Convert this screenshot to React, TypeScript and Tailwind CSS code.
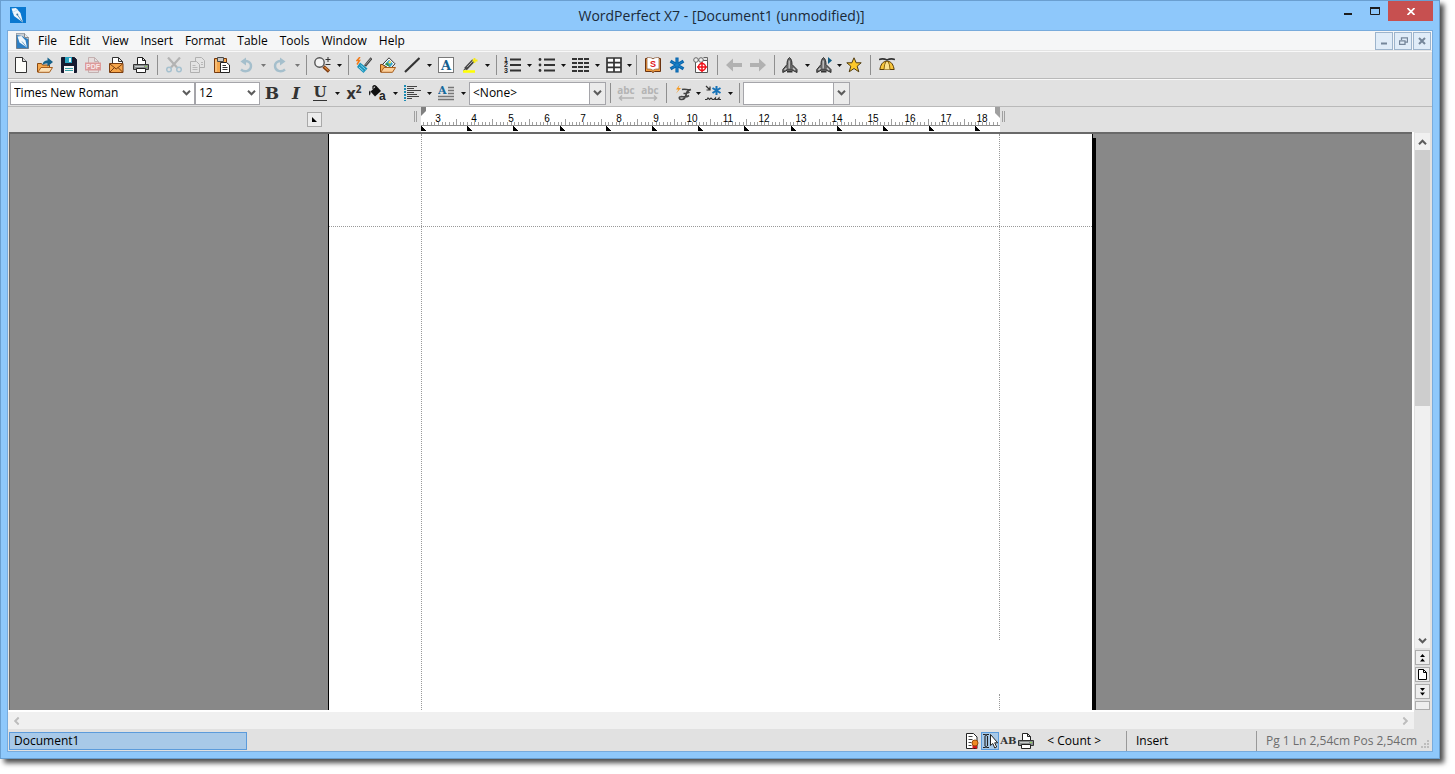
import React from 'react';

interface IconProps {
  children: React.ReactNode;
  w?: number;
  h?: number;
}

const Icon: React.FC<IconProps> = ({ children, w = 16, h = 16 }) => (
  <svg width={w} height={h} viewBox={`0 0 ${w} ${h}`} fill="none" aria-hidden="true" className="shrink-0">
    {children}
  </svg>
);

// Logo

const NibLogo = () => (
  <Icon>
    <rect width="16" height="16" fill="#0a78d0" />
    <path d="M1.500 1.500L6 1l4.500 5L13 15.500 4 9z" fill="#eef6fc" />
    <path d="M7.500 8l5 7" stroke="#5b93bd" />
    <path d="M2.500 5.500L8 2.500" stroke="#b4d3ea" strokeWidth="0.700" />
    <circle cx="7.300" cy="7.500" r="1" fill="#3f7aa8" />
  </Icon>
);

const NibDocument = () => (
  <Icon w={13} h={16}>
    <path d="M.5.5h8l4 4v11H.5z" fill="#2d7fc4" stroke="#6f7f8e" />
    <path d="M.5.5h8l4 4v2L6 3 .5 2z" fill="#c9ced3" />
    <path d="M8.500.5v4h4" fill="#e8e8e8" stroke="#8a8a8a" />
    <path d="M1.500 3.500l4-.5 4 4.500 1.500 7-7.500-5z" fill="#f2f8fc" />
    <path d="M6 8.500l4.500 5.500" stroke="#5b93bd" strokeWidth="0.800" />
  </Icon>
);

// Main toolbar icons

const NewFile = () => (
  <Icon>
    <path d="M2.500.5h7l4 4v11h-11z" fill="#fdfdfa" stroke="#333" />
    <path d="M9.500.5v4h4" fill="#ddd" stroke="#333" />
  </Icon>
);

const OpenFolder = () => (
  <Icon>
    <path d="M.5 15V6.500h4l1 1.500h7v2" fill="#f6a94e" stroke="#8a4a12" />
    <path d="M.8 15.300 4 10.500h11.500l-3 4.800z" fill="#fde0b4" stroke="#a65d1c" />
    <path d="M5.500 8c.5-3.500 2.500-4.500 5-4.500V.5l5.500 4.500-5.500 4.500v-3c-2 0-3.500 0-5 1.500z" fill="#15618a" />
  </Icon>
);

const Save = () => (
  <Icon>
    <path d="M.5.5h13l2 2v13H.5z" fill="#161a30" stroke="#161a30" />
    <path d="M4 0h7v6H4z" fill="#2aa3c0" />
    <path d="M8 1h2v4H8z" fill="#e6f5f8" />
    <path d="M3 9h10v7H3z" fill="#f6f6f6" />
    <path d="M4 11.500h8M4 13.500h8" stroke="#3aa0a8" />
  </Icon>
);

const PdfFile = () => (
  <Icon>
    <path d="M3.500 6V.5h6l4 4V6M3.500 13v2.500h10V13M9.500.5v4h4" fill="#e6dcdc" stroke="#c3b0b0" />
    <rect y="5.500" width="16" height="8" fill="#dc9a9a" />
    <text x="8" y="12" textAnchor="middle" fill="#f8eaea" className="font-['Liberation_Sans',sans-serif] text-[7px] font-bold">
      PDF
    </text>
  </Icon>
);

const Mail = () => (
  <Icon>
    <path d="M3.500 8V.5h6l4 4V13M9.500.5v4h4" fill="#fff" stroke="#333" />
    <path d="M.5 6.500h13.500v9H.5z" fill="#f5a54a" stroke="#7a3d10" />
    <path d="M1 7l6.200 5L13.500 7M1 15l4.500-4.500M13.500 15 9 10.500" stroke="#7a3d10" />
  </Icon>
);

const Printer = () => (
  <Icon>
    <path d="M4.500 7V.5h5l3 3V7M9.500.5v3h3" fill="#fff" stroke="#222" />
    <path d="M.5 7.500h15v5H.5z" fill="#8b8f8f" stroke="#333" />
    <path d="M3.500 11.500h9v4h-9z" fill="#fff" stroke="#222" />
    <path d="M12 9.500h2" stroke="#8fd460" />
    <path d="M2 9.500h9" stroke="#c6caca" />
  </Icon>
);

const Cut = () => (
  <Icon>
    <path d="M2 .5l9 10M14 .5l-9 10" stroke="#b3b3b3" strokeWidth="2.200" />
    <circle cx="3" cy="12.500" r="2.300" stroke="#a6c1cf" strokeWidth="1.500" />
    <circle cx="13" cy="12.500" r="2.300" stroke="#a6c1cf" strokeWidth="1.500" />
  </Icon>
);

const Copy = () => (
  <Icon>
    <path d="M5.500.5h6l3 3v7h-9z" fill="#e3e3e3" stroke="#b0b0b0" />
    <path d="M.5 4.500h6l3 3v8h-9z" fill="#e3e3e3" stroke="#b0b0b0" />
    <path d="M2.500 8.500h3M2.500 10.500h5M2.500 12.500h5M11 5.500h2M11 7.500h2" stroke="#b8b8b8" />
  </Icon>
);

const Paste = () => (
  <Icon>
    <path d="M.5 1.500h12v14H.5z" fill="#f3a64d" stroke="#74380e" />
    <path d="M2 3v12" stroke="#fbd5a2" />
    <path d="M3.500.5h6v4h-6z" fill="#c9c9c9" stroke="#4a4a4a" />
    <path d="M6.500 5.500h6l3 2.500v7.500h-9z" fill="#fff" stroke="#222" />
    <path d="M8.500 8.500H12M8.500 10.500h5M8.500 12.500h5" stroke="#333" />
  </Icon>
);

const Undo = () => (
  <Icon>
    <path d="M5 4.500c4-1.500 8 .8 8 4.500 0 5-6 7-10 3.500" stroke="#a5bfcc" strokeWidth="2.400" />
    <path d="M8 .5v8L2.500 4.500z" fill="#a5bfcc" />
  </Icon>
);

const Redo = () => (
  <Icon>
    <path d="M11 4.500C7 3 3 5.300 3 9c0 5 6 7 10 3.500" stroke="#a5bfcc" strokeWidth="2.400" />
    <path d="M8 .5v8l5.500-4z" fill="#a5bfcc" />
  </Icon>
);

const Find = () => (
  <Icon w={17}>
    <circle cx="5.500" cy="5.500" r="4.700" fill="#f4f4f4" stroke="#555" strokeWidth="1.400" />
    <path d="M9.500 9.500l5.500 5" stroke="#7b3a10" strokeWidth="3.400" />
    <path d="M10.500 10l4 3.600" stroke="#e38b3b" strokeWidth="1.200" />
    <path d="M11.500 2.500h5M14 0v5M11.500 7.500h5" stroke="#333" />
  </Icon>
);

const QuickFormat = () => (
  <Icon>
    <path d="M9 9l6.500-8" stroke="#444" strokeWidth="2.600" />
    <path d="M9.500 8l5.500-6.500" stroke="#aaa" strokeWidth="0.800" />
    <path d="M4 5.500l7.500 6-4 4.500L1 10z" fill="#1993bb" />
    <path d="M4.500 8l5 4.500M3 10l4.500 4" stroke="#8bd8ee" />
    <path d="M4 0L1 3.500h2.500L1 7.500" stroke="#f07a1a" strokeWidth="1.500" />
  </Icon>
);

const ClipArt = () => (
  <Icon>
    <path d="M.5 15V7.500h4l1 1.500" fill="#f6a94e" stroke="#8a4a12" />
    <path d="M2.500 7.500 9 .8l6 6L10 12z" fill="#fff" stroke="#333" />
    <path d="M5 7l4-4.200 4 4-3 3.500z" fill="#36a3c9" />
    <path d="M5 7.500l2-2 3 4.500z" fill="#3e8f36" />
    <circle cx="9.800" cy="5.300" r="1.200" fill="#ffe14a" />
    <path d="M.8 15.300 4 10.500h11.500l-3 4.800z" fill="#fdd09a" stroke="#a65d1c" />
  </Icon>
);

const Line = () => (
  <Icon>
    <path d="M1 15L15.500 1" stroke="#333" strokeWidth="2.200" />
  </Icon>
);

const TextBox = () => (
  <Icon>
    <rect x="1" y="1" width="14" height="14" fill="#fff" />
    <path d="M.5.5h15v15H.5z" stroke="#111" strokeDasharray="1 1" />
    <text x="8" y="13" textAnchor="middle" fill="#17618f" className="font-['DejaVu_Serif',serif] text-[13px] font-bold">
      A
    </text>
  </Icon>
);

const Highlight = () => (
  <Icon>
    <path d="M1 14.500h12" stroke="#ff0" strokeWidth="2.500" />
    <path d="M3.500 12l8-8.500" stroke="#444" strokeWidth="3.400" />
    <path d="M5 10.200l6-6.400" stroke="#b5b5b5" />
    <path d="M1 13.500l2.500-3 1.500 1.500z" fill="#444" />
    <path d="M12.500 1v5M10.500 3.500h5" stroke="#f7ea18" strokeWidth="1.800" />
  </Icon>
);

const digitClass = "font-['Liberation_Sans',sans-serif] text-[7px] font-bold";

const NumberedList = () => (
  <Icon w={17}>
    <path d="M6 2.500h11M6 8h11M6 13.500h11" stroke="#333" strokeWidth="2" />
    <text x="0" y="5" fill="#222" className={digitClass}>1</text>
    <text x="0" y="10" fill="#222" className={digitClass}>2</text>
    <text x="0" y="16" fill="#222" className={digitClass}>3</text>
  </Icon>
);

const BulletList = () => (
  <Icon w={17}>
    <path d="M6 2.500h11M6 8h11M6 13.500h11" stroke="#333" strokeWidth="2" />
    <circle cx="2" cy="2.500" r="1.400" fill="#333" />
    <circle cx="2" cy="8" r="1.400" fill="#333" />
    <circle cx="2" cy="13.500" r="1.400" fill="#333" />
  </Icon>
);

const Columns = () => (
  <Icon w={17}>
    <path d="M0 2h17M0 6h17M0 10h17M0 14h17" stroke="#333" strokeWidth="2" strokeDasharray="5 1" />
  </Icon>
);

const TableGrid = () => (
  <Icon>
    <path d="M1 1h14v14H1zM8 1v14M1 5.700h14M1 10.400h14" fill="#fff" stroke="#333" strokeWidth="1.700" />
  </Icon>
);

const SpellBook = () => (
  <Icon>
    <path d="M.5 1.500h15v13H9.500l-1.500 1-1.500-1h-6z" fill="#f09a3c" stroke="#6b3310" />
    <path d="M2 .5c2.500 0 5 0 6 1.500 1-1.500 3.500-1.500 6-1.500V12c-3 0-5 0-6 1.500C7 12 5 12 2 12z" fill="#fff" stroke="#8a5a3a" strokeWidth="0.700" />
    <text x="8" y="10" textAnchor="middle" fill="#e1141b" className="font-['Liberation_Sans',sans-serif] text-[9px] font-bold">
      S
    </text>
  </Icon>
);

const Asterisk = () => (
  <Icon>
    <path d="M8 .5v15M1.500 4.200l13 7.600M14.500 4.200l-13 7.600" stroke="#0b66ad" strokeWidth="3.200" />
    <path d="M8 1.500v13M2.500 4.800l11 6.400M13.500 4.800l-11 6.400" stroke="#1a83ca" />
  </Icon>
);

const MacroTarget = () => (
  <Icon>
    <path d="M2.500 3.500h12v12h-12z" fill="#fff" stroke="#555" />
    <circle cx="3" cy="3" r="2.300" fill="#eee" stroke="#666" />
    <circle cx="8" cy="3" r="2.300" fill="#eee" stroke="#666" />
    <path d="M10.500.5h4v4" stroke="#666" />
    <circle cx="9" cy="10" r="3.500" stroke="#f01018" strokeWidth="1.500" />
    <path d="M9 5v10M4 10h10" stroke="#f01018" strokeWidth="1.500" />
  </Icon>
);

const ArrowLeft = () => (
  <Icon>
    <path d="M0 8l7-6.500v4.500h9v4H7v4.500z" fill="#b1b1b1" />
  </Icon>
);

const ArrowRight = () => (
  <Icon>
    <path d="M16 8L9 1.500v4.500H0v4h9v4.500z" fill="#b1b1b1" />
  </Icon>
);

const Rocket = () => (
  <Icon>
    <path d="M7.500.5c2 1.500 2.500 4 2.500 7l5 5v3L10 13H5.500L.8 15.500v-3L5 7.500c0-3 .5-5.500 2.500-7z" fill="#666" stroke="#2f2f2f" />
    <path d="M7.200 3.500v8M2.500 13l2-2M13 13l-2-2" stroke="#c4c4c4" strokeWidth="1.400" />
    <path d="M5 14.500h5.500" stroke="#333" strokeWidth="2" />
  </Icon>
);

const RocketPlay = () => (
  <Icon>
    <path d="M7.500.5c2 1.500 2.500 4 2.500 7l5 5v3L10 13H5.500L.8 15.500v-3L5 7.500c0-3 .5-5.500 2.500-7z" fill="#666" stroke="#2f2f2f" />
    <path d="M7.200 3.500v8M2.500 13l2-2M13 13l-2-2" stroke="#c4c4c4" strokeWidth="1.400" />
    <path d="M5 14.500h5.500" stroke="#333" strokeWidth="2" />
    <path d="M12 0l4 3.500-4 3.500z" fill="#145f85" />
  </Icon>
);

const Star = () => (
  <Icon>
    <path d="M8 .8l2.200 5h5l-4 3.400 1.600 5.600L8 11.500l-4.800 3.300 1.600-5.600-4-3.400h5z" fill="#fdc92a" stroke="#4e3a10" />
  </Icon>
);

const Beanie = () => (
  <Icon>
    <path d="M.8 12.500Q2 5.500 6 4.500h4Q14 5.500 15.200 12.500z" fill="#f8c53b" stroke="#5b3f0c" />
    <path d="M5 12.500Q5.200 7 7 4.500h2Q10.800 7 11 12.500" fill="#fbe08c" stroke="#8a6514" />
    <path d="M0 2.500Q4 1 8 3 12 1 16 2.500" stroke="#333" strokeWidth="1.600" />
  </Icon>
);

// Property bar icons

const FillBucket = () => (
  <Icon w={18}>
    <path d="M1.500 6.500L7.500 1l4.500 5-6 5.500z" fill="#111" />
    <path d="M4 4V1.500q1.500-1.500 3 0V5" stroke="#111" strokeWidth="1.200" />
    <path d="M1 5.500c-1.500 1-1 4-.5 5 1-1 1.500-3 .5-5z" fill="#111" />
    <text x="10" y="15" fill="#222" className="font-['Liberation_Sans',sans-serif] text-[12px] font-bold">
      a
    </text>
  </Icon>
);

const AlignLeft = () => (
  <Icon w={17}>
    <path d="M1 0v16" stroke="#1c8bb3" strokeWidth="2" strokeDasharray="2 1" />
    <path d="M3 1.500h10M3 3.500h7M3 5.500h14M3 7.500h7M3 9.500h10M3 11.500h12M3 13.500h5" stroke="#444" />
  </Icon>
);

const ParagraphFormat = () => (
  <Icon>
    <text x="0" y="9" fill="#176a9c" className="font-['DejaVu_Serif',serif] text-[11px] font-bold">
      A
    </text>
    <path d="M10 2.500h6M10 5.500h6M10 8.500h6M0 11.500h16M0 14.500h16" stroke="#777" strokeWidth="1.500" />
  </Icon>
);

const QuickScript = () => (
  <Icon w={17}>
    <path d="M4.500 0L1 4.500h2.500L1 8.500l5-5.500H3.500z" fill="#f6981d" />
    <path d="M7 4.500c3-1 6 .8 9 0-3 .8-4 1.500-4.500 3.500-.5 3-1.500 6.500-5 6.500-2.500 0-3-2.500-1-2.800 2.500-.5 5 1.500 8.500-1.200M8.500 8.500c2.500 0 4.500 0 6-1.500" stroke="#444" strokeWidth="1.600" />
  </Icon>
);

const SymbolInsert = () => (
  <Icon w={17}>
    <path d="M1 1l4 4M5 1.500V5H1.500" stroke="#333" strokeWidth="1.200" />
    <path d="M11.500 1v9M7.500 3l8 5M15.500 3l-8 5" stroke="#1773b8" strokeWidth="2" />
    <path d="M0 14.500h2l1-1.500 1.500 1.500L6 13l1.500 1.500H9L10.500 13v1.500h2L14 13v1.500h2" stroke="#333" strokeWidth="1.200" />
  </Icon>
);

const Reveal = () => (
  <Icon w={13}>
    <path d="M.5.5h7l3.500 3.500v11.500H.5z" fill="#fff" stroke="#222" />
    <path d="M2.500 3.500h4M2.500 6.500h4M2.500 9.500h3M2.500 12.500h3" stroke="#444" />
    <path d="M6.500 11v5l2-1 2.500 1v-5" fill="#d8161d" />
    <circle cx="9" cy="10" r="3" fill="#f08a24" stroke="#9b4c0c" />
  </Icon>
);

const ShadowCursor = () => (
  <Icon>
    <path d="M1 1.500h2l1 1 1-1h2M1 14.500h2l1-1 1 1h2M3 3v10M5.500 3v10" stroke="#222" strokeWidth="1.100" />
    <path d="M8.500 1.500v11l2.300-2 2 4.500 1.900-1-2-4.200h3z" fill="#fff" stroke="#222" />
  </Icon>
);

// Small shared pieces

const Chevron: React.FC<{ className?: string; color?: string }> = ({ className = '', color = '#5b5b5b' }) => (
  <svg width="9" height="6" viewBox="0 0 9 6" fill="none" aria-hidden="true" className={className}>
    <path d="M1 .8l3.500 3.500L8 .8" stroke={color} strokeWidth="2" />
  </svg>
);

const ToolButton: React.FC<{ label: string; children: React.ReactNode; disabled?: boolean }> = ({
  label,
  children,
  disabled = false,
}) => (
  <button
    type="button"
    aria-label={label}
    disabled={disabled}
    className="flex h-6 w-6 shrink-0 items-center justify-center text-[#333]"
  >
    {children}
  </button>
);

const MenuArrow: React.FC<{ label: string; tight?: boolean; disabled?: boolean }> = ({
  label,
  tight = false,
  disabled = false,
}) => (
  <button
    type="button"
    aria-label={label}
    disabled={disabled}
    className={`flex h-6 shrink-0 items-center justify-center ${tight ? 'w-[6px]' : 'w-[10px]'}`}
  >
    <svg width="5" height="3" viewBox="0 0 5 3" aria-hidden="true" className="shrink-0">
      <path d="M0 0h5L2.500 3z" fill={disabled ? '#777' : '#111'} />
    </svg>
  </button>
);

const Separator: React.FC<{ tight?: boolean }> = ({ tight = false }) => (
  <div className={`flex shrink-0 justify-center ${tight ? 'w-2' : 'w-[9px]'}`}>
    <div className="h-5 w-px bg-[#8f8f8f]" />
  </div>
);

interface ComboProps {
  label: string;
  options: string[];
  width: string;
  boxed?: boolean;
}

const Combo: React.FC<ComboProps> = ({ label, options, width, boxed = false }) => (
  <div className={`relative h-[23px] shrink-0 ${width}`}>
    <select
      aria-label={label}
      className="h-full w-full appearance-none border border-[#a5a5aa] bg-white pl-[3px] text-[12px] leading-4 text-black outline-none"
    >
      {options.map((option) => (
        <option key={option}>{option}</option>
      ))}
    </select>
    <span
      className={`pointer-events-none absolute inset-y-0 right-0 flex w-[17px] items-center justify-center ${
        boxed ? 'border border-[#a5a5aa] bg-[#ebebeb]' : ''
      }`}
    >
      <Chevron />
    </span>
  </div>
);

// Title and menu

const TitleBar = () => (
  <header className="flex h-[29px] shrink-0 items-start">
    <div className="flex flex-1 pt-[6px] pl-[3px]">
      <NibLogo />
    </div>
    <h1 className="pt-[5px] text-[14px] leading-5 text-[#1b2a38]">WordPerfect X7 - [Document1 (unmodified)]</h1>
    <div className="flex flex-1 justify-end">
      <button type="button" aria-label="Minimize" className="flex h-[21px] w-[27px] items-center justify-center">
        <Icon w={8} h={8}>
          <path d="M0 6h8" stroke="#1d1d1d" strokeWidth="2" />
        </Icon>
      </button>
      <button type="button" aria-label="Maximize" className="flex h-5 w-[27px] items-center justify-center">
        <Icon w={10} h={8}>
          <path d="M.5 0v7.500h9V0" stroke="#1d1d1d" />
          <path d="M0 1h10" stroke="#1d1d1d" strokeWidth="2" />
        </Icon>
      </button>
      <button
        type="button"
        aria-label="Close"
        className="flex h-5 w-[45px] items-center justify-center bg-[#c75050]"
      >
        <Icon w={8} h={7}>
          <path d="M.5 0l7 7M7.500 0l-7 7" stroke="#fff" strokeWidth="1.700" />
        </Icon>
      </button>
    </div>
  </header>
);

const menus = ['File', 'Edit', 'View', 'Insert', 'Format', 'Table', 'Tools', 'Window', 'Help'];

const mdiButton = 'flex h-[18px] w-[18px] items-center justify-center border border-[#9db4cc] bg-[#e0ecf8]';

const MenuBar = () => (
  <nav className="flex h-5 shrink-0 items-center border-b border-[#e3e3e3] bg-[#f5f6f7] pr-px pl-2">
    <NibDocument />
    <div className="flex flex-1 pl-[3px]">
      {menus.map((menu) => (
        <button key={menu} type="button" className="px-[6px] leading-4">
          {menu}
        </button>
      ))}
    </div>
    <div className="flex gap-px">
      <button type="button" aria-label="Minimize document" className={mdiButton}>
        <Icon w={8} h={8}>
          <path d="M1 6.500h6" stroke="#75869a" strokeWidth="2" />
        </Icon>
      </button>
      <button type="button" aria-label="Restore document" className={mdiButton}>
        <Icon w={9} h={8}>
          <path d="M2.500 3V.8h6v4.400H6.500M.5 3.800h5.500v3.700H.5z" stroke="#75869a" strokeWidth="1.300" />
        </Icon>
      </button>
      <button type="button" aria-label="Close document" className={mdiButton}>
        <Icon w={8} h={8}>
          <path d="M1 1l6 6M7 1L1 7" stroke="#75869a" strokeWidth="2" />
        </Icon>
      </button>
    </div>
  </nav>
);

// Toolbars

const barClass = 'flex h-7 shrink-0 items-center border-t border-b border-t-[#f8f8f8] border-b-[#b9b9b9]';

const MainToolbar = () => (
  <div role="toolbar" aria-label="Main toolbar" className={`${barClass} pl-px`}>
    <ToolButton label="New"><NewFile /></ToolButton>
    <ToolButton label="Open"><OpenFolder /></ToolButton>
    <ToolButton label="Save"><Save /></ToolButton>
    <ToolButton label="Publish to PDF" disabled><PdfFile /></ToolButton>
    <ToolButton label="Mail"><Mail /></ToolButton>
    <ToolButton label="Print"><Printer /></ToolButton>
    <Separator />
    <ToolButton label="Cut" disabled><Cut /></ToolButton>
    <ToolButton label="Copy" disabled><Copy /></ToolButton>
    <ToolButton label="Paste"><Paste /></ToolButton>
    <ToolButton label="Undo" disabled><Undo /></ToolButton>
    <MenuArrow label="Undo list" disabled />
    <ToolButton label="Redo" disabled><Redo /></ToolButton>
    <MenuArrow label="Redo list" disabled />
    <Separator tight />
    <ToolButton label="Zoom"><Find /></ToolButton>
    <MenuArrow label="Zoom levels" />
    <Separator tight />
    <ToolButton label="QuickFormat"><QuickFormat /></ToolButton>
    <ToolButton label="Clipart"><ClipArt /></ToolButton>
    <ToolButton label="Draw line"><Line /></ToolButton>
    <MenuArrow label="Shapes" />
    <ToolButton label="Text box"><TextBox /></ToolButton>
    <ToolButton label="Highlight"><Highlight /></ToolButton>
    <MenuArrow label="Highlight colors" />
    <Separator tight />
    <ToolButton label="Numbering"><NumberedList /></ToolButton>
    <MenuArrow label="Numbering styles" />
    <ToolButton label="Bullets"><BulletList /></ToolButton>
    <MenuArrow label="Bullet styles" />
    <ToolButton label="Columns"><Columns /></ToolButton>
    <MenuArrow label="Column layouts" />
    <ToolButton label="Table"><TableGrid /></ToolButton>
    <MenuArrow label="Table size" tight />
    <Separator />
    <ToolButton label="Spell Checker"><SpellBook /></ToolButton>
    <ToolButton label="Symbols"><Asterisk /></ToolButton>
    <ToolButton label="Reveal Codes"><MacroTarget /></ToolButton>
    <Separator />
    <ToolButton label="Back" disabled><ArrowLeft /></ToolButton>
    <ToolButton label="Forward" disabled><ArrowRight /></ToolButton>
    <Separator tight />
    <ToolButton label="Launch"><Rocket /></ToolButton>
    <MenuArrow label="Launch list" />
    <ToolButton label="Run"><RocketPlay /></ToolButton>
    <MenuArrow label="Run list" tight />
    <ToolButton label="Favorites"><Star /></ToolButton>
    <Separator />
    <ToolButton label="PerfectExpert"><Beanie /></ToolButton>
  </div>
);

const abcClass = 'text-[10px] leading-[9px] font-bold text-[#b4b4b4]';

const PropertyBar = () => (
  <div role="toolbar" aria-label="Property bar" className={`${barClass} pl-[2px]`}>
    <Combo label="Font" options={['Times New Roman']} width="w-[185px]" />
    <Combo label="Font size" options={['12']} width="w-[65px]" />
    <ToolButton label="Bold">
      <span className="font-['DejaVu_Serif',serif] text-[17px] leading-6 font-bold">B</span>
    </ToolButton>
    <ToolButton label="Italic">
      <span className="font-['DejaVu_Serif',serif] text-[17px] leading-6 font-bold italic">I</span>
    </ToolButton>
    <ToolButton label="Underline">
      <span className="border-b border-[#333] font-['DejaVu_Serif',serif] text-[15px] leading-[15px] font-bold">U</span>
    </ToolButton>
    <MenuArrow label="Underline styles" />
    <ToolButton label="Superscript">
      <span className="text-[16px] leading-5 font-bold">x</span>
      <span className="pb-2 text-[10px] leading-3 font-bold">2</span>
    </ToolButton>
    <ToolButton label="Font color"><FillBucket /></ToolButton>
    <MenuArrow label="Font colors" />
    <ToolButton label="Justification"><AlignLeft /></ToolButton>
    <MenuArrow label="Justification options" />
    <ToolButton label="Paragraph style"><ParagraphFormat /></ToolButton>
    <MenuArrow label="Paragraph styles" />
    <div className="pl-px">
      <Combo label="Style" options={['<None>']} width="w-[137px]" boxed />
    </div>
    <Separator tight />
    <ToolButton label="Previous word" disabled>
      <span className="flex flex-col items-center">
        <span className={abcClass}>abc</span>
        <Icon w={16} h={6}>
          <path d="M16 3H2M4 .5L1.500 3 4 5.500" stroke="#b4b4b4" strokeWidth="1.500" />
        </Icon>
      </span>
    </ToolButton>
    <ToolButton label="Next word" disabled>
      <span className="flex flex-col items-center">
        <span className={abcClass}>abc</span>
        <Icon w={16} h={6}>
          <path d="M0 3h14M12 .5L14.500 3 12 5.500" stroke="#b4b4b4" strokeWidth="1.500" />
        </Icon>
      </span>
    </ToolButton>
    <Separator />
    <ToolButton label="QuickFonts"><QuickScript /></ToolButton>
    <MenuArrow label="QuickFonts list" tight />
    <ToolButton label="Insert symbol"><SymbolInsert /></ToolButton>
    <MenuArrow label="Symbol list" />
    <Separator tight />
    <Combo label="Prompt" options={['']} width="w-[107px]" boxed />
  </div>
);

// Ruler, one centimetre is a little over 36 pixels

const CM = 36.27;
const FIRST_LABEL = 17;
const RULER_WIDTH = 579;
const labels = Array.from({ length: 16 }, (_, i) => i + 3);
const ticks = Array.from({ length: 159 }, (_, i) => i - 4);
const tabStops = Array.from({ length: 13 }, (_, i) => i);

const RulerHandle = () => <div className="h-[11px] w-[3px] border-x border-[#a0a0a0]" />;

const Ruler = () => (
  <div className="grid h-[25px] shrink-0 grid-cols-[1fr_auto_1fr] pr-[19px]">
    <div className="flex items-start justify-end gap-[92px] pr-1">
      <button
        type="button"
        aria-label="Tab type"
        className="mt-[5px] flex h-[15px] w-[15px] items-center justify-center border border-[#a9a9a9] bg-[#ececec]"
      >
        <Icon w={5} h={5}>
          <path d="M0 0v5h5z" fill="#000" />
        </Icon>
      </button>
      <div className="pt-1">
        <RulerHandle />
      </div>
    </div>
    <svg width={RULER_WIDTH} height="25" viewBox={`0 0 ${RULER_WIDTH} 25`} role="img" aria-label="Ruler">
      <rect width={RULER_WIDTH} height="25" fill="#fff" />
      {ticks.map((t) => {
        const x = Math.round(FIRST_LABEL + (t * CM) / 10);
        const half = Math.abs(t % 10) === 5;
        return <rect key={t} x={x} y={half ? 12 : 15} width="1" height={half ? 6 : 3} fill="#a0a0a0" />;
      })}
      <rect y="18" width={RULER_WIDTH} height="1" fill="#8c8c8c" />
      {labels.map((n, i) => (
        <text
          key={n}
          x={Math.round(FIRST_LABEL + i * CM)}
          y="15"
          textAnchor="middle"
          fill="#000"
          className="font-['Liberation_Sans',Arial,sans-serif] text-[10px]"
        >
          {n}
        </text>
      ))}
      {tabStops.map((t) => {
        const x = Math.round(t * 46.2);
        return <path key={t} d={`M${x} 19v5h6z`} fill="#000" shapeRendering="crispEdges" />;
      })}
      <path d="M0 0h5v4l-5 5z" fill="#808080" />
      <path d="M579 0h-5v6l5 5z" fill="#a0a0a0" />
    </svg>
    <div className="pt-1 pl-[2px]">
      <RulerHandle />
    </div>
  </div>
);

// Document

const DocumentPage = () => (
  <div className="flex">
    <div className="relative grid w-[765px] grid-cols-[92px_1fr_93px] border-x border-black bg-white">
      <div />
      <textarea
        aria-label="Document text"
        className="resize-none border-l border-dotted border-[#999] bg-transparent pt-[92px] outline-none"
      />
      <div className="flex flex-col">
        <div className="h-[506px] shrink border-l border-dotted border-[#999]" />
        <div className="h-[54px] shrink-0" />
        <div className="flex-1 border-l border-dotted border-[#999]" />
      </div>
      <div className="pointer-events-none absolute inset-x-0 top-[92px] border-t border-dotted border-[#999]" />
    </div>
    <div className="mt-1 w-[3px] bg-black" />
  </div>
);

const navButton = 'flex h-[15px] w-[15px] shrink-0 items-center justify-center border border-[#adadad] bg-[#eee]';

const VerticalScroll = () => (
  <div className="flex w-5 shrink-0 flex-col items-center border-l-2 border-white pt-px pr-px">
    <div className="flex w-[15px] flex-1 flex-col bg-[#f0f0f0]">
      <button type="button" aria-label="Scroll up" className="flex h-[17px] items-center justify-center">
        <Chevron className="rotate-180" />
      </button>
      <div className="h-64 bg-[#cdcdcd]" />
      <div className="flex-1" />
      <button type="button" aria-label="Scroll down" className="flex h-[15px] items-center justify-center">
        <Chevron />
      </button>
    </div>
    <div className="flex flex-col gap-[2px] pt-[2px]">
      <button type="button" aria-label="Previous page" className={navButton}>
        <Icon w={5} h={8}>
          <path d="M2.500 0L5 3H0zM2.500 4.500L5 7.500H0z" fill="#000" />
        </Icon>
      </button>
      <button type="button" aria-label="Browse by page" className={navButton}>
        <Icon w={9} h={11}>
          <path d="M.5.5h5l3 3v7h-8zM5.500.5v3h3" fill="#fff" stroke="#000" />
        </Icon>
      </button>
      <button type="button" aria-label="Next page" className={navButton}>
        <Icon w={5} h={8}>
          <path d="M2.500 3L5 0H0zM2.500 7.500L5 4.500H0z" fill="#000" />
        </Icon>
      </button>
      <div className="h-[9px] w-[15px] border border-[#adadad] bg-[#eee]" />
    </div>
  </div>
);

const HorizontalScroll = () => (
  <div className="h-[19px] shrink-0 pr-[18px]">
    <div className="flex h-full items-center justify-between border-t-2 border-white bg-[#f0f0f0] px-1">
      <button type="button" aria-label="Scroll left">
        <Chevron className="rotate-90" color="#bdbdbd" />
      </button>
      <button type="button" aria-label="Scroll right">
        <Chevron className="-rotate-90" color="#bdbdbd" />
      </button>
    </div>
  </div>
);

// Status bar

const StatusBar = () => (
  <footer className="flex h-[22px] shrink-0 items-center pt-[2px]">
    <button
      type="button"
      className="ml-px h-[18px] w-[238px] border border-[#5c9bdb] bg-[#a8c9e8] pl-1 text-left leading-4"
    >
      Document1
    </button>
    <div className="flex flex-1 items-center justify-end pr-[25px]">
      <button type="button" aria-label="Document review" className="flex w-[18px] justify-center">
        <Reveal />
      </button>
      <button
        type="button"
        aria-label="Shadow cursor"
        className="flex h-[18px] w-[18px] items-center justify-center border border-[#5c9bdb] bg-[#a8c9e8]"
      >
        <ShadowCursor />
      </button>
      <button
        type="button"
        aria-label="Caps lock"
        className="flex w-[18px] justify-center font-['DejaVu_Serif',serif] text-[10px] leading-4 font-bold text-[#333]"
      >
        AB
      </button>
      <button type="button" aria-label="Print settings" className="flex w-[18px] justify-center">
        <Printer />
      </button>
      <button type="button" className="pl-3 leading-4">
        &lt; Count &gt;
      </button>
    </div>
    <div className="h-5 w-[130px] border-l border-[#999] pl-[9px] leading-5">Insert</div>
    <div className="h-5 w-[162px] border-l border-[#999] pl-[9px] leading-5 whitespace-nowrap text-[#6d6d6d]">
      Pg 1 Ln 2,54cm Pos 2,54cm
    </div>
    <div className="flex w-[14px] justify-end self-end pr-[2px] pb-[2px]">
      <Icon w={9} h={9}>
        <path
          d="M6 0h2v2H6zM3 3h2v2H3zM6 3h2v2H6zM0 6h2v2H0zM3 6h2v2H3zM6 6h2v2H6z"
          fill="#bdbdbd"
        />
      </Icon>
    </div>
  </footer>
);

export default function App() {
  return (
    <div className="h-screen min-h-[480px] overflow-hidden bg-white pr-[15px] pb-[15px] font-['Open_Sans','Segoe_UI',sans-serif] text-[12px] text-black">
      <div className="flex h-full flex-col border border-[#6a9fd0] bg-[#8ec8fb] px-[6px] pb-[6px] shadow-[4px_4px_5px_rgba(0,0,0,0.7)]">
        <TitleBar />
        <div className="flex min-h-0 flex-1 flex-col border border-[#78abdc] bg-[#e1e1e1]">
          <MenuBar />
          <MainToolbar />
          <PropertyBar />
          <Ruler />
          <main className="flex min-h-0 flex-1 pl-px">
            <div className="flex min-w-0 flex-1 justify-center overflow-hidden border-t-2 border-l border-[#696969] bg-[#888] pl-[2px]">
              <DocumentPage />
            </div>
            <VerticalScroll />
          </main>
          <HorizontalScroll />
          <StatusBar />
        </div>
      </div>
    </div>
  );
}
